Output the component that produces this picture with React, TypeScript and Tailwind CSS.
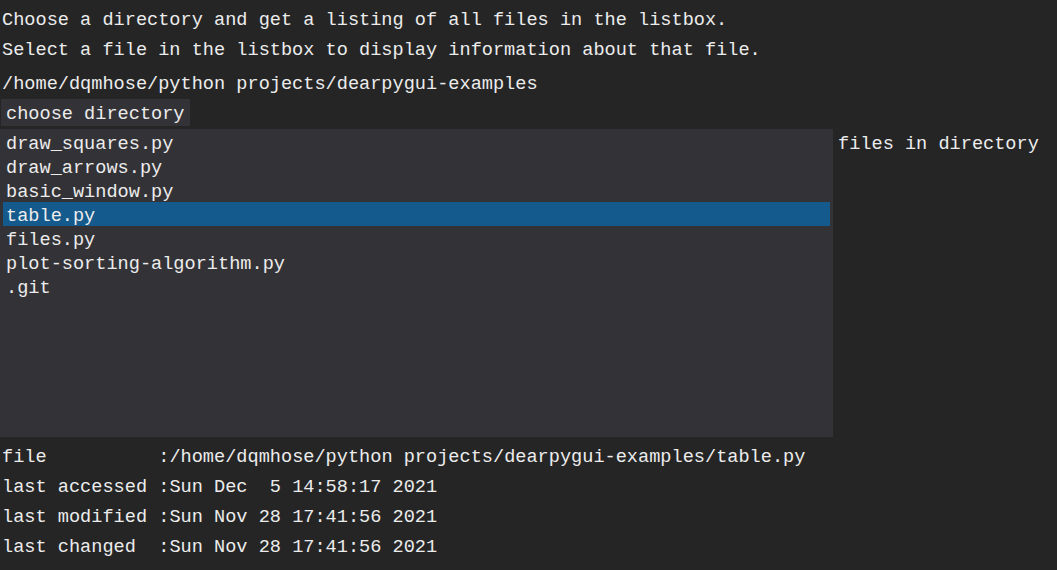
import React from "react";

const files = [
  "draw_squares.py",
  "draw_arrows.py",
  "basic_window.py",
  "table.py",
  "files.py",
  "plot-sorting-algorithm.py",
  ".git",
];

const info: [string, string][] = [
  ["file          ", "/home/dqmhose/python projects/dearpygui-examples/table.py"],
  ["last accessed ", "Sun Dec  5 14:58:17 2021"],
  ["last modified ", "Sun Nov 28 17:41:56 2021"],
  ["last changed  ", "Sun Nov 28 17:41:56 2021"],
];

export default function App() {
  return (
    <div
      className="w-[1057px] h-[570px] bg-[#252526] text-[#ececec] overflow-hidden whitespace-pre"
      style={{ fontFamily: '"Liberation Mono", monospace' }}
    >
      <div className="text-[18.6px] pt-[5px]">
        <div className="h-[30px] pt-[2px] leading-[28px] pl-[2px]">
          Choose a directory and get a listing of all files in the listbox.
        </div>
        <div className="h-[30px] pt-[2px] leading-[28px] pl-[2px]">
          Select a file in the listbox to display information about that file.
        </div>
        <div className="h-[30px] pt-[2px] leading-[28px] pl-[2px] mt-[4px]">
          /home/dqmhose/python projects/dearpygui-examples
        </div>
        <div className="h-[27px] flex">
          <div className="h-[27px] pt-[3px] leading-[25px] bg-[#333337] ml-[1px] px-[5px]">choose directory</div>
        </div>
        <div className="flex mt-[3px] gap-[5px]">
          <div className="w-[833px] h-[308px] bg-[#333337] pt-[1px] px-[3px]">
            {files.map((f, i) => (
              <div
                key={f}
                className={
                  "h-[24px] pt-[4px] leading-[22px] pl-[3px] " + (i === 3 ? "bg-[#145a8d]" : "")
                }
              >
                {f}
              </div>
            ))}
          </div>
          <div className="h-[24px] pt-[4px] leading-[22px] mt-[1px]">files in directory</div>
        </div>
        <div className="mt-[4px]">
          {info.map(([k, v]) => (
            <div key={k} className="h-[30px] pt-[3px] leading-[28px] pl-[2px]">
              {k}:{v}
            </div>
          ))}
        </div>
      </div>
    </div>
  );
}
